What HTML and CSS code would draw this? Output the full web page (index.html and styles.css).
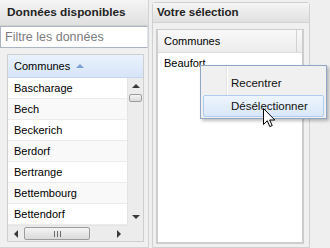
FILE: index.html
```html
<!DOCTYPE html>
<html lang="fr">
<head>
    <meta charset="UTF-8">
    <title>Sélection des communes</title>
    <link rel="stylesheet" href="styles.css">
</head>
<body>
    <div class="page">
        <div class="panel panel-left">
            <div class="panel-header">Données disponibles</div>
            <input class="filter" type="text" placeholder="Filtre les données">
            <div class="panel-body">
                <div class="grid">
                    <div class="grid-head blue">Communes <span class="sort-up"></span></div>
                    <div class="grid-main">
                        <div class="rows">
                            <div class="row">Bascharage</div>
                            <div class="row alt">Bech</div>
                            <div class="row">Beckerich</div>
                            <div class="row alt">Berdorf</div>
                            <div class="row">Bertrange</div>
                            <div class="row alt">Bettembourg</div>
                            <div class="row">Bettendorf</div>
                        </div>
                        <div class="vscroll">
                            <div class="sb-btn"><span class="tri tri-up"></span></div>
                            <div class="vthumb"></div>
                            <div class="sb-track"></div>
                            <div class="sb-btn"><span class="tri tri-down"></span></div>
                        </div>
                        <div class="hscroll">
                            <div class="sb-btn-h"><span class="tri tri-left"></span></div>
                            <div class="hthumb"><span class="grip"></span></div>
                            <div class="sb-track"></div>
                            <div class="sb-btn-h"><span class="tri tri-right"></span></div>
                        </div>
                        <div class="corner"></div>
                    </div>
                </div>
            </div>
        </div>

        <div class="panel panel-right">
            <div class="panel-header small">Votre sélection</div>
            <div class="panel-body right-body">
                <div class="grid grid-sel">
                    <div class="grid-head grey">
                        <span class="head-cell">Communes</span>
                        <span class="head-spacer"></span>
                    </div>
                    <div class="row sel-row">Beaufort</div>
                </div>
            </div>
        </div>
    </div>

    <!-- menu contextuel sur la ligne sélectionnée -->
    <div class="ctx-menu">
        <div class="ctx-item">Recentrer</div>
        <div class="ctx-item active">Désélectionner</div>
    </div>

    <svg class="cursor" width="13" height="20" viewBox="0 0 13 20">
        <path d="M0.5 0.5 L0.5 16.5 L4.3 12.8 L6.8 18.6 L9.2 17.6 L6.7 12 L11.8 12 Z" fill="#fff" stroke="#000" stroke-width="1"/>
    </svg>
</body>
</html>
```

FILE: styles.css
```css
body {
    margin: 0;
    background-color: #efefef;
    font-family: 'Liberation Sans', Arial, sans-serif;
    font-size: 11px;
    color: #000;
    width: 330px;
    height: 248px;
    overflow: hidden;
    position: relative;
}
.page {
    display: flex;
    gap: 3px;
    height: 248px;
}
.panel {
    display: flex;
    flex-direction: column;
    box-sizing: border-box;
    background-color: #f0f0f0;
}
.panel-left {
    width: 149px;
    border-right: 1px solid #d3d3d3;
    border-bottom: 1px solid #d3d3d3;
}
.panel-right {
    width: 158px;
    margin-top: 2px;
    border: 1px solid #d0d0d0;
    border-radius: 3px 3px 0 0;
}
.panel-header {
    height: 25px;
    line-height: 25px;
    padding-left: 7px;
    font-weight: bold;
    font-size: 11.8px;
    color: #222;
    background: linear-gradient(#f5f5f5, #e0e0e0);
    border-bottom: 1px solid #d2d2d2;
    flex-shrink: 0;
}
.panel-header.small {
    height: 19px;
    line-height: 19px;
    padding-left: 4px;
    font-size: 11.5px;
}
.filter {
    height: 22px;
    margin: 0;
    padding: 0 4px;
    border: 1px solid #aab4c2;
    border-right-color: #dde3ea;
    background: #fff;
    font-family: 'Liberation Sans', Arial, sans-serif;
    font-size: 12.5px;
    box-sizing: border-box;
    width: 148px;
    flex-shrink: 0;
}
.filter::placeholder {
    color: #7c7c7c;
}
.panel-body {
    flex: 1;
    padding: 6px 4px 5px 7px;
    display: flex;
    min-height: 0;
}
.right-body {
    padding: 6px 5px 3px 3px;
}
.grid {
    flex: 1;
    display: flex;
    flex-direction: column;
    background: #fff;
    border: 1px solid #cfcfcf;
    min-height: 0;
}
.grid-sel {
    border: 2px solid #cdcdcd;
    border-top-width: 1px;
}
.grid-head {
    height: 23px;
    line-height: 23px;
    padding-left: 6px;
    flex-shrink: 0;
    box-sizing: border-box;
}
.grid-head.blue {
    background: linear-gradient(#eaf2fc, #d6e5f8);
    border-bottom: 1px solid #c5d6ec;
}
.grid-head.grey {
    display: flex;
    padding-left: 0;
    background: linear-gradient(#f9f9f9, #ececec);
    border-bottom: 1px solid #dcdcdc;
}
.head-cell {
    flex: 1;
    padding-left: 6px;
    border-right: 1px solid #d2d2d2;
}
.head-spacer {
    width: 5px;
}
.sort-up {
    display: inline-block;
    width: 0;
    height: 0;
    margin-left: 3px;
    vertical-align: 2px;
    border-left: 4px solid transparent;
    border-right: 4px solid transparent;
    border-bottom: 4px solid #7a9fd0;
}
.grid-main {
    flex: 1;
    display: grid;
    grid-template-columns: 1fr 16px;
    grid-template-rows: 1fr 16px;
    min-height: 0;
}
.rows {
    overflow: hidden;
}
.row {
    height: 20px;
    line-height: 20px;
    padding-left: 6px;
    border-bottom: 1px solid #ececec;
    background: #fff;
}
.row.alt {
    background: #f9f9f9;
}
.sel-row {
    padding-left: 6px;
    border-bottom: none;
}
.vscroll {
    display: flex;
    flex-direction: column;
    background: #ececec;
    border-left: 1px solid #e4e4e4;
}
.hscroll {
    display: flex;
    background: #ececec;
    border-top: 1px solid #e4e4e4;
}
.corner {
    background: #ececec;
}
.sb-btn {
    height: 16px;
    display: flex;
    align-items: center;
    justify-content: center;
}
.sb-btn-h {
    width: 16px;
    display: flex;
    align-items: center;
    justify-content: center;
}
.sb-track {
    flex: 1;
}
.vthumb {
    height: 6px;
    margin: 0 1px;
    border: 1px solid #9c9c9c;
    border-radius: 2px;
    background: linear-gradient(#f4f4f4, #dadada);
}
.hthumb {
    width: 64px;
    margin: 1px 0;
    border: 1px solid #9c9c9c;
    border-radius: 2px;
    background: linear-gradient(#f4f4f4, #dadada);
    display: flex;
    align-items: center;
    justify-content: center;
}
.grip {
    width: 7px;
    height: 6px;
    background: repeating-linear-gradient(to right, #6a6a6a 0, #6a6a6a 1px, transparent 1px, transparent 3px);
}
.tri {
    width: 0;
    height: 0;
}
.tri-up {
    border-left: 4px solid transparent;
    border-right: 4px solid transparent;
    border-bottom: 4px solid #3a3a3a;
}
.tri-down {
    border-left: 4px solid transparent;
    border-right: 4px solid transparent;
    border-top: 4px solid #3a3a3a;
}
.tri-left {
    border-top: 4px solid transparent;
    border-bottom: 4px solid transparent;
    border-right: 4px solid #3a3a3a;
}
.tri-right {
    border-top: 4px solid transparent;
    border-bottom: 4px solid transparent;
    border-left: 4px solid #3a3a3a;
}
.ctx-menu {
    position: absolute;
    left: 200px;
    top: 65px;
    width: 127px;
    height: 54px;
    box-sizing: border-box;
    padding: 6px 2px 2px 2px;
    border: 1px solid #8fa6c6;
    background: linear-gradient(to right, #f0f0f0 25px, #e3e3e3 25px, #e3e3e3 26px, #fff 26px, #fff 27px, #f0f0f0 27px);
    box-shadow: 2px 2px 3px rgba(0, 0, 0, 0.25);
}
.ctx-item {
    height: 20px;
    line-height: 20px;
    padding-left: 27px;
    font-size: 11.5px;
    color: #111;
    border: 1px solid transparent;
    border-radius: 2px;
    margin-bottom: 1px;
}
.ctx-item.active {
    border-color: #aecbf0;
    background: linear-gradient(#eef5fd, #d9e7f8);
}
.cursor {
    position: absolute;
    left: 263px;
    top: 108px;
}
```
